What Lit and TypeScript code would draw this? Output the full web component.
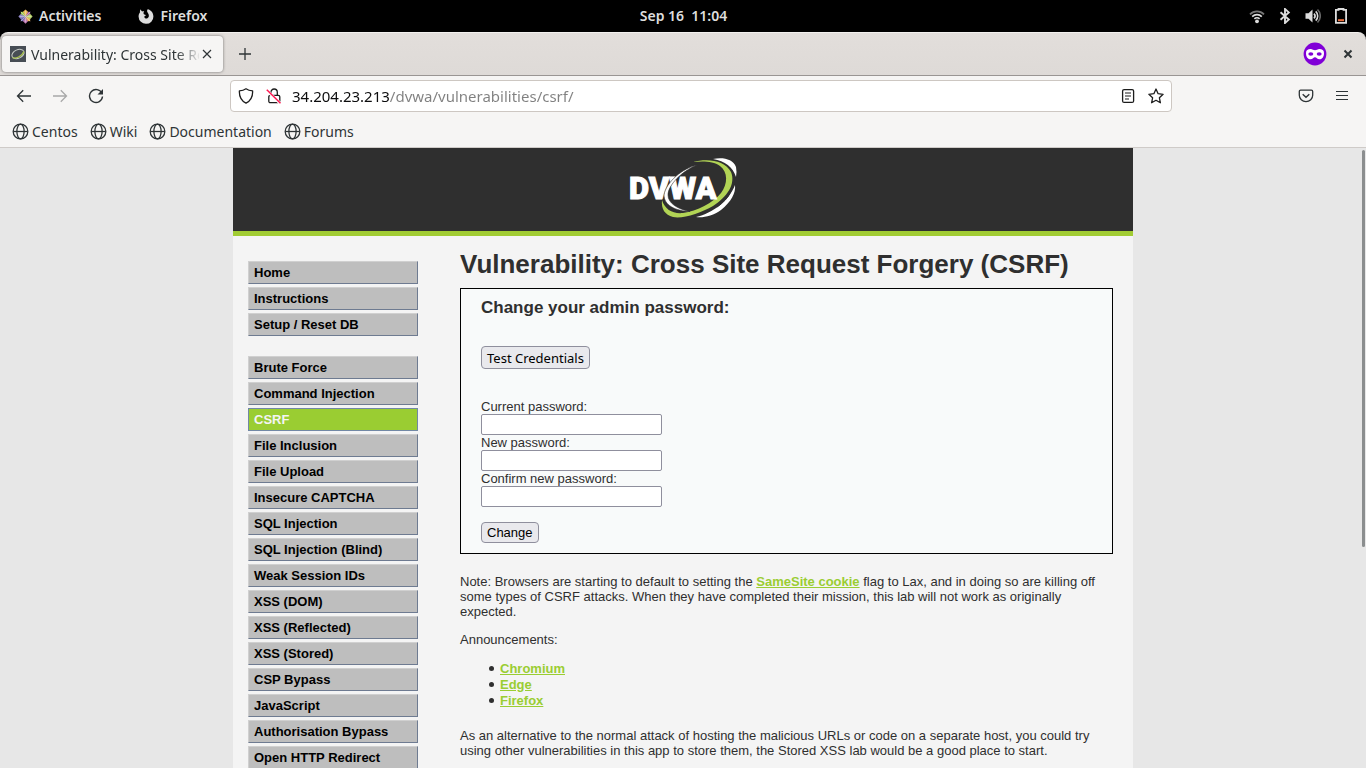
import { LitElement, html, css, svg } from "lit";
import { customElement } from "lit/decorators.js";
import { classMap } from "lit/directives/class-map.js";

const icon = (size: number, body: unknown) =>
  html`<svg class="icon" width=${size} height=${size} viewBox="0 0 16 16" aria-hidden="true">${body}</svg>`;

const globe = svg`<g fill="none" stroke="#2e3436" stroke-width="1.2">
  <circle cx="8" cy="8" r="6.9"/><ellipse cx="8" cy="8" rx="3.4" ry="6.9"/><path d="M1.2 8h13.6"/></g>`;

const back = svg`<path d="M15 8H1.5M7.2 2.3 1.5 8l5.700 5.700" fill="none" stroke="#2e3436" stroke-width="1.3"/>`;
const forward = svg`<path d="M1 8h13.500M8.800 2.300 14.500 8l-5.700 5.700" fill="none" stroke="#a8a8a8" stroke-width="1.3"/>`;
const reload = svg`<path d="M13.900 5.200A6.500 6.500 0 1 0 14.500 8.500" fill="none" stroke="#2e3436" stroke-width="1.4"/>
  <path d="M15 1v5.500H9.500z" fill="#2e3436"/>`;
const shield = svg`<path d="M8 .8c1.900 1.400 4 2 6.600 2.100.3 5.300-1.700 9.800-6.600 12.300C3.100 12.700 1.100 8.200 1.400 2.900 4 2.800 6.100 2.200 8 .8z"
  fill="none" stroke="#1c1c1c" stroke-width="1.3" stroke-linejoin="round"/>`;
const lock = svg`<g fill="none" stroke="#1c1c1c" stroke-width="1.3">
  <rect x="2.800" y="7.300" width="11" height="7.400" rx="1.500"/><path d="M4.900 7V4.200a3.200 3.200 0 0 1 6.400 0V7"/></g>
  <path d="M.8 2.400 14.200 15.400" stroke="#fff" stroke-width="3"/>
  <path d="M.8 1.800 14.500 15.200" stroke="#ff1650" stroke-width="1.500"/>`;
const reader = svg`<rect x="2.600" y="1.600" width="11" height="12.800" rx="1.500" fill="none" stroke="#1c1c1c" stroke-width="1.300"/>
  <path d="M5 5h6M5 8h6M5 11h4" stroke="#1c1c1c" stroke-width="1.200"/>`;
const star = svg`<path d="m8 1 2.100 4.700 5 .6-3.700 3.500 1 5L8 12.300l-4.400 2.500 1-5L.9 6.300l5-.6z"
  fill="none" stroke="#1c1c1c" stroke-width="1.300" stroke-linejoin="round"/>`;
const pocket = svg`<path d="M2.600 2.200h10.800a1.300 1.300 0 0 1 1.300 1.300V7.300a6.700 6.300 0 0 1-13.400 0V3.500a1.300 1.300 0 0 1 1.300-1.300z"
  fill="none" stroke="#2e3436" stroke-width="1.300"/><path d="M4.700 6.300 8 9.300l3.300-3" fill="none" stroke="#2e3436" stroke-width="1.400"/>`;
const burger = svg`<path d="M2 3.500h12M2 7.500h12M2 11.500h12" stroke="#2e3436" stroke-width="1.200"/>`;

const flower = svg`<g>
  <rect x="3" y="3" width="4.600" height="4.600" fill="#9cc84b"/><rect x="8.400" y="3" width="4.600" height="4.600" fill="#a65a9c"/>
  <rect x="3" y="8.400" width="4.600" height="4.600" fill="#6f6bb0"/><rect x="8.400" y="8.400" width="4.600" height="4.600" fill="#efb04b"/>
  <path d="M8 .4 10.600 3 8 7.600 5.400 3z" fill="#f0bc55"/><path d="M15.600 8 13 10.600 8.400 8 13 5.400z" fill="#b9d56c"/>
  <path d="M8 15.600 5.400 13 8 8.400l2.600 4.600z" fill="#c07cb5"/><path d="M.4 8 3 5.400 7.600 8 3 10.600z" fill="#8f86c6"/>
  <path d="M3 3l10 10M13 3 3 13M8 2v12M2 8h12" stroke="#e8e4ea" stroke-width=".5"/></g>`;
const firefox = svg`<path fill="#dcdcdc" d="M2.600 1.300c.3 1 .8 1.700 1.500 2.100.9-.2 1.500-.1 2.100.1-.7.700-.9 1.500-.6 2.300.3.800 1 1.100 2.300 1.200-.2.900-1.300 1-1.700 1.700.3 1.300 1.300 1.900 2.600 1.700 2-.3 2.700-2.700 1.400-4.900-.5-.8-1.100-1.400-1.100-2.400 0-.7.200-1.300.6-1.800 3.400.7 5.700 3.700 5.700 7.200A7.400 7.200 0 0 1 .6 8.800C.5 7.200.9 5.800 1.900 4.500c-.1-1.200.100-2.200.7-3.200z"/>`;

const wifi = svg`<g fill="none" stroke="#dcdcdc" stroke-width="1.700">
  <path d="M1 6.300a9.800 9.800 0 0 1 14 0" stroke="#777"/><path d="M3.200 8.600a6.800 6.800 0 0 1 9.600 0"/><path d="M5.400 10.900a3.700 3.700 0 0 1 5.200 0"/></g>
  <circle cx="8" cy="13.300" r="1.900" fill="#dcdcdc"/>`;
const bluetooth = svg`<path d="m3.500 4.200 8.300 7.400L8 15V1l3.800 3.400-8.300 7.400" fill="none" stroke="#dcdcdc" stroke-width="1.900"/>`;
const volume = svg`<path d="M.5 5.300H3.500L7.500 1.600v12.800L3.500 10.700H.5z" fill="#dcdcdc"/><g fill="none" stroke-width="1.600">
  <path d="M9 5.600a3.500 3.500 0 0 1 0 4.800" stroke="#dcdcdc"/><path d="M10.700 3.300a6.500 6.500 0 0 1 0 9.400" stroke="#dcdcdc"/>
  <path d="M12.500 1.500a9 9 0 0 1 0 13" stroke="#666"/></g>`;
const battery = svg`<path d="M5.500 1.800V1h5v.8h2.600v13H2.900v-13z" fill="none" stroke="#dcdcdc" stroke-width="1.800"/>
  <path d="M5 11.200h6v2H5z" fill="#f0703c"/>`;

const logo = html`<svg class="logo" width="108" height="64" viewBox="0 0 108 64" role="img" aria-label="DVWA">
  <path d="M64 5C78 1 96 3 102 15C107 27 98 40 84 49C72 56 54 62 44 60C36 58 32 52 33 43C36 53 44 57 54 56C68 54 84 46 92 36C99 27 99 15 91 9C84 4 74 4 64 5z" fill="#b2d455"/>
  <path d="M84 2C94 0 104 2 107 10Q108 15 107 20C104 10 96 4 84 2z" fill="#fff"/>
  <path d="M106 28C107 36 102 45 92 53C84 59 74 61 67 60C84 56 100 44 106 28z" fill="#fff"/>
  <path d="M88 50C94 46 99 41 102 34" fill="none" stroke="#2f2f2f" stroke-width="1"/>
  <text class="wordmark" x="0" y="42">DVWA</text>
  <path d="M68 8C54 11 37 25 35 38C35 48 46 54 61 54.500C48 52 39 46 39 38C39 28 53 14 68 8z" fill="#fff" stroke="#2f2f2f" stroke-width=".6"/>
</svg>`;

const setupLinks = ["Home", "Instructions", "Setup / Reset DB"];
const labLinks = [
  "Brute Force", "Command Injection", "CSRF", "File Inclusion", "File Upload", "Insecure CAPTCHA",
  "SQL Injection", "SQL Injection (Blind)", "Weak Session IDs", "XSS (DOM)", "XSS (Reflected)",
  "XSS (Stored)", "CSP Bypass", "JavaScript", "Authorisation Bypass", "Open HTTP Redirect",
];

@customElement("desktop-bar")
class DesktopBar extends LitElement {
  static styles = css`
    :host { display: block; background: #000; color: #dedede; font: 600 14px/32px "Noto Sans", sans-serif; }
    .bar { display: grid; grid-template-columns: 1fr auto 1fr; height: 32px; padding: 0 17px 0 18px; }
    .group { display: flex; align-items: center; gap: 37px; }
    .end { justify-content: flex-end; gap: 12px; }
    .entry { display: flex; align-items: center; gap: 6px; padding: 0; border: 0; background: none; color: inherit; font: inherit; }
    .clock { white-space: pre; }
    .icon { display: block; flex: none; }
  `;
  render() {
    return html`<header class="bar">
      <div class="group">
        <button class="entry">${icon(15, flower)}Activities</button>
        <button class="entry">${icon(16, firefox)}Firefox</button>
      </div>
      <button class="entry clock">Sep 16  11:04</button>
      <div class="group end">${icon(16, wifi)}${icon(16, bluetooth)}${icon(16, volume)}${icon(16, battery)}</div>
    </header>`;
  }
}

@customElement("browser-chrome")
class BrowserChrome extends LitElement {
  static styles = css`
    :host { display: block; background: #000; color: #2e3436; font: 14px/20px "Noto Sans", sans-serif; }
    .icon { display: block; flex: none; }
    button { display: flex; align-items: center; justify-content: center; padding: 0; border: 0; background: none; color: inherit; font: inherit; }
    .tabs { display: flex; align-items: center; height: 42px; padding: 0 0 0 2px; border-top: 1px solid #f2f0ee;
      border-bottom: 1px solid #999593; border-radius: 8px 8px 0 0; background: linear-gradient(#e2dedb, #dedad7); }
    .tab { display: flex; align-items: center; box-sizing: border-box; width: 221px; height: 36px; padding: 0 8px; border-radius: 4px;
      background: #f6f5f4; box-shadow: 0 0 3px rgba(0, 0, 0, .5); }
    .title { flex: 1; margin-left: 5px; padding-top: 2px; overflow: hidden; white-space: nowrap; mask-image: linear-gradient(90deg, #000 145px, transparent 170px); }
    .close { width: 16px; height: 16px; }
    .new { width: 36px; height: 36px; margin-left: 4px; }
    .spacer { flex: 1; }
    .window-close { width: 36px; height: 36px; margin-left: 3px; }
    .nav { display: grid; grid-template-columns: auto minmax(0, 116px) 1fr minmax(0, 116px) auto; align-items: center;
      height: 40px; padding: 0 6px; background: #f6f5f4; }
    .tools { display: flex; }
    .tools button { width: 36px; height: 32px; }
    .address { grid-column: 3; display: flex; align-items: center; box-sizing: border-box; height: 32px; padding: 0 7px;
      border: 1px solid #cdc7c2; border-radius: 4px; background: #fff; }
    .address button { width: 16px; height: 28px; }
    .address button + button { margin-left: 12px; }
    .url { flex: 1; min-width: 0; margin: 0 10px; padding: 0; border: 0; outline: 0; font: 15px/28px "Noto Sans", sans-serif;
      color: transparent; background: linear-gradient(90deg, #0c0c0d 98px, #808080 98px); background-clip: text; -webkit-background-clip: text; }
    .last { grid-column: 5; }
    .bookmarks { display: flex; gap: 12px; height: 31px; padding: 0 12px; border-bottom: 1px solid #cfcbc8; background: #f6f5f4; }
    .bookmark { display: flex; align-items: center; gap: 3px; color: inherit; text-decoration: none; }
  `;
  render() {
    return html`
      <div class="tabs">
        <div class="tab">
          <svg class="icon" width="16" height="16" viewBox="0 0 16 16" aria-hidden="true">
            <rect width="16" height="16" fill="#474d54"/>
            <ellipse cx="8" cy="8" rx="6.400" ry="4.200" transform="rotate(-24 8 8)" fill="none" stroke="#c8ccc8" stroke-width="1"/>
            <path d="M2.500 11.500C5 13.500 12.500 10 13.800 5.500" fill="none" stroke="#a8c050" stroke-width="1.200"/>
          </svg>
          <span class="title">Vulnerability: Cross Site Request</span>
          <button class="close" aria-label="Close tab">${icon(16, svg`<path d="m4 4 8 8M12 4l-8 8" stroke="#2e3436" stroke-width="1.200"/>`)}</button>
        </div>
        <button class="new" aria-label="New tab">${icon(16, svg`<path d="M8 2v12M2 8h12" stroke="#2e3436" stroke-width="1.300"/>`)}</button>
        <span class="spacer"></span>
        <svg class="icon" width="24" height="24" viewBox="0 0 24 24" aria-hidden="true">
          <circle cx="12" cy="12" r="11.400" fill="#8000d7"/>
          <path d="M3 11c0-3 2-4 4.500-4 2 0 3 1.300 4.500 1.300S14.500 7 16.500 7C19 7 21 8 21 11c0 4-2 6.300-4.500 6.300-2.300 0-3-2-4.500-2s-2.200 2-4.500 2C5 17.300 3 15 3 11z" fill="#fff"/>
          <ellipse cx="7.800" cy="12" rx="2.500" ry="1.700" fill="#8000d7"/><ellipse cx="16.200" cy="12" rx="2.500" ry="1.700" fill="#8000d7"/>
        </svg>
        <button class="window-close" aria-label="Close window">${icon(16, svg`<path d="m4.500 4.500 7 7M11.500 4.500l-7 7" stroke="#2e3436" stroke-width="2"/>`)}</button>
      </div>
      <nav class="nav">
        <div class="tools">
          <button aria-label="Back">${icon(16, back)}</button>
          <button aria-label="Forward">${icon(16, forward)}</button>
          <button aria-label="Reload">${icon(16, reload)}</button>
        </div>
        <div class="address">
          <button aria-label="Tracking protection">${icon(16, shield)}</button>
          <button aria-label="Connection not secure">${icon(16, lock)}</button>
          <input class="url" aria-label="Address" value="34.204.23.213/dvwa/vulnerabilities/csrf/" />
          <button aria-label="Reader view">${icon(16, reader)}</button>
          <button aria-label="Bookmark">${icon(16, star)}</button>
        </div>
        <div class="tools last">
          <button aria-label="Pocket">${icon(16, pocket)}</button>
          <button aria-label="Menu">${icon(16, burger)}</button>
        </div>
      </nav>
      <div class="bookmarks">
        ${["Centos", "Wiki", "Documentation", "Forums"].map(
          (name) => html`<a class="bookmark" href="#">${icon(17, globe)}${name}</a>`)}
      </div>`;
  }
}

@customElement("csrf-page")
class CsrfPage extends LitElement {
  static styles = css`
    :host { display: block; background: #e7e7e7; color: #2f2f2f; font: 13px/15px "Liberation Sans", Arial, sans-serif; }
    .container { max-width: 900px; margin: 0 auto; background: #f4f4f4; }
    .header { display: flex; justify-content: center; padding: 9px 0 10px; border-bottom: 5px solid #a1cc33; background: #2f2f2f; }
    .logo { display: block; }
    .wordmark { font: 900 31px Roboto, sans-serif; fill: #fff; stroke: #fff; stroke-width: 1px; }
    .columns { display: grid; grid-template-columns: 170px minmax(0, 1fr); gap: 42px; padding: 0 20px 20px 15px; }
    .menu { display: flex; flex-direction: column; gap: 20px; padding-top: 25px; }
    .list { display: flex; flex-direction: column; gap: 3px; margin: 0; padding: 0; list-style: none; }
    .item { display: block; padding: 3px 5px; border: 1px solid; border-color: #d0d0d0 #6e7b91 #6e7b91 #d0d0d0;
      background: #bebebe; color: #000; font-weight: bold; text-decoration: none; }
    .item.selected { border-color: #7288a5; background: #9acd32; color: #f4f4f4; }
    h1 { margin: 13px 0 9px; font-size: 26px; line-height: 30px; }
    .box { padding: 9px 20px 10px; border: 1px solid #000; background: #f8fafa; }
    h3 { margin: 0 0 28px; font-size: 17px; line-height: 20px; }
    .box button { display: block; box-sizing: border-box; padding: 0 5px; border: 1px solid #8f8f9d; border-radius: 4px;
      background: #e9e9ed; color: #000; font: 13px/19px "Liberation Sans", Arial, sans-serif; }
    .box .test { padding-top: 2px; font: 13px/19px "Noto Sans", sans-serif; }
    form { margin-top: 30px; }
    label { display: block; }
    .field { display: block; box-sizing: border-box; width: 181px; height: 21px; padding: 1px 2px; border: 1px solid #8f8f9d; border-radius: 2px; background: #fff; font: inherit; }
    form button { margin-top: 15px; }
    p { margin: 0 0 13px; }
    .note { margin-top: 20px; }
    .main a { color: #9acd32; font-weight: bold; }
    .sites { margin: 14px 0 20px; padding-left: 29px; line-height: 15px; list-style: none; }
    .sites li { display: flex; align-items: center; gap: 6px; }
    .sites li + li { padding-top: 1px; }
    .sites li::before { content: ""; width: 5px; height: 5px; border-radius: 50%; background: #2f2f2f; }
  `;
  private links(names: string[]) {
    return html`<ul class="list">${names.map(
      (name) => html`<li><a class=${classMap({ item: true, selected: name === "CSRF" })} href="#">${name}</a></li>`)}</ul>`;
  }
  render() {
    return html`<div class="container">
      <header class="header">${logo}</header>
      <div class="columns">
        <nav class="menu">${this.links(setupLinks)}${this.links(labLinks)}</nav>
        <main class="main">
          <h1>Vulnerability: Cross Site Request Forgery (CSRF)</h1>
          <section class="box">
            <h3>Change your admin password:</h3>
            <button class="test">Test Credentials</button>
            <form>
              <label for="current">Current password:</label><input class="field" id="current" type="password" />
              <label for="new">New password:</label><input class="field" id="new" type="password" />
              <label for="confirm">Confirm new password:</label><input class="field" id="confirm" type="password" />
              <button type="button">Change</button>
            </form>
          </section>
          <p class="note">Note: Browsers are starting to default to setting the <a href="#">SameSite cookie</a> flag to Lax, and in doing so are killing off some types of CSRF attacks. When they have completed their mission, this lab will not work as originally expected.</p>
          <p>Announcements:</p>
          <ul class="sites">
            <li><a href="#">Chromium</a></li>
            <li><a href="#">Edge</a></li>
            <li><a href="#">Firefox</a></li>
          </ul>
          <p>As an alternative to the normal attack of hosting the malicious URLs or code on a separate host, you could try using other vulnerabilities in this app to store them, the Stored XSS lab would be a good place to start.</p>
        </main>
      </div>
    </div>`;
  }
}

@customElement("app-root")
class AppRoot extends LitElement {
  static styles = css`
    :host { display: flex; flex-direction: column; height: 100vh; overflow: hidden; }
    .viewport { position: relative; flex: 1; min-height: 0; overflow: hidden; background: #e7e7e7; }
    .thumb { position: absolute; top: 2px; right: 1px; width: 3px; height: 64%; border-radius: 2px; background: #8b8e8f; }
  `;
  render() {
    return html`<desktop-bar></desktop-bar><browser-chrome></browser-chrome>
      <div class="viewport"><csrf-page></csrf-page><div class="thumb"></div></div>`;
  }
}
